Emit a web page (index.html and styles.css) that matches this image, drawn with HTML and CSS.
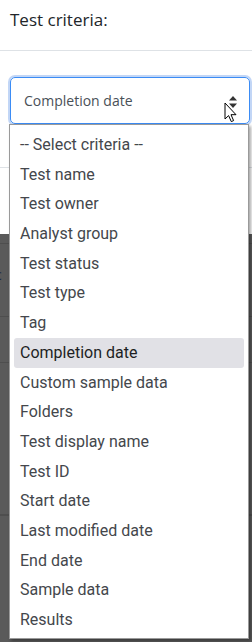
FILE: index.html
```html
<!DOCTYPE html>
<html lang="en">
<head>
    <meta charset="UTF-8">
    <meta name="viewport" content="width=device-width, initial-scale=1.0">
    <title>Test criteria</title>
    <link rel="stylesheet" href="styles.css">
</head>
<body>

    <!-- Modal header -->
    <div class="modal-header">Test criteria:</div>

    <!-- Modal body with the select -->
    <div class="modal-body">
        <div class="select-box">
            <span>Completion date</span>
            <svg class="select-arrows" width="8" height="12" viewBox="0 0 8 12">
                <path d="M4 0 L8 4.5 H0 Z" fill="#333"/>
                <path d="M4 12 L8 7.5 H0 Z" fill="#333"/>
            </svg>
        </div>
    </div>
    <div class="modal-footer"></div>

    <!-- Page behind the backdrop -->
    <div class="backdrop">
        <div class="backdrop-row row-first"></div>
        <div class="backdrop-row row-text"><span>c</span></div>
        <div class="backdrop-row row-mid"></div>
        <div class="backdrop-row row-tall"></div>
        <div class="backdrop-row"></div>
    </div>

    <!-- Open dropdown list -->
    <ul class="dropdown">
        <li>-- Select criteria --</li>
        <li>Test name</li>
        <li>Test owner</li>
        <li>Analyst group</li>
        <li>Test status</li>
        <li>Test type</li>
        <li>Tag</li>
        <li class="selected">Completion date</li>
        <li>Custom sample data</li>
        <li>Folders</li>
        <li>Test display name</li>
        <li>Test ID</li>
        <li>Start date</li>
        <li>Last modified date</li>
        <li>End date</li>
        <li>Sample data</li>
        <li>Results</li>
    </ul>

    <!-- Mouse pointer -->
    <svg class="cursor" width="13" height="21" viewBox="0 0 13 21">
        <path d="M1 1 V17 L4.6 13.6 L7.3 19.6 L9.6 18.6 L7 12.7 H12 Z" fill="#fff" stroke="#000" stroke-width="1" stroke-linejoin="round"/>
    </svg>

</body>
</html>
```

FILE: styles.css
```css
/* Global Styles */
* {
    margin: 0;
    padding: 0;
    box-sizing: border-box;
}

body {
    width: 252px;
    height: 642px;
    overflow: hidden;
    position: relative;
    background: #ffffff;
    font-family: 'Open Sans', 'Noto Sans', sans-serif;
    color: #212529;
}

/* Modal */
.modal-header {
    height: 51px;
    padding: 8px 10px 0;
    font-size: 17px;
    line-height: 24px;
    border-bottom: 1px solid #dee2e6;
}

.modal-body {
    height: 117px;
    padding: 26px 2px 0 10px;
    border-bottom: 1px solid #dee2e6;
}

.select-box {
    height: 47px;
    display: flex;
    align-items: center;
    justify-content: space-between;
    padding: 0 12px 0 13px;
    font-size: 14px;
    color: #495057;
    border: 1px solid #3b8cf5;
    border-radius: 5px;
    box-shadow: 0 0 0 2px rgba(120, 165, 235, 0.45);
}

.select-arrows {
    margin-top: 2px;
}

.modal-footer {
    height: 66px;
}

/* Darkened page behind */
.backdrop {
    height: 410px;
    background: #5a5a5a;
}

.backdrop-row {
    border-bottom: 1px solid #4e4e4e;
}

.row-first {
    height: 10px;
}

.row-text {
    height: 73px;
    padding-top: 21px;
    font-size: 14px;
    line-height: 20px;
    color: #1f2a44;
}

.row-text span {
    margin-left: -5px;
}

.row-mid {
    height: 46px;
}

.row-tall {
    height: 152px;
}

/* Dropdown list */
.dropdown {
    position: absolute;
    top: 124px;
    left: 9px;
    width: 240px;
    height: 515px;
    list-style: none;
    padding: 5px 4px 4px;
    background: #ffffff;
    border: 1px solid #9a9a9a;
    box-shadow: 2px 2px 3px rgba(0, 0, 0, 0.35);
    font-family: Roboto, 'Noto Sans', sans-serif;
    font-size: 16px;
    color: #44474c;
}

.dropdown li {
    height: 29.7px;
    line-height: 29.7px;
    padding-left: 6px;
    white-space: nowrap;
}

.dropdown li.selected {
    background: #e1e1e6;
    border-radius: 3px;
    color: #1d1f24;
}

/* Mouse pointer */
.cursor {
    position: absolute;
    top: 102px;
    left: 224px;
}
```
